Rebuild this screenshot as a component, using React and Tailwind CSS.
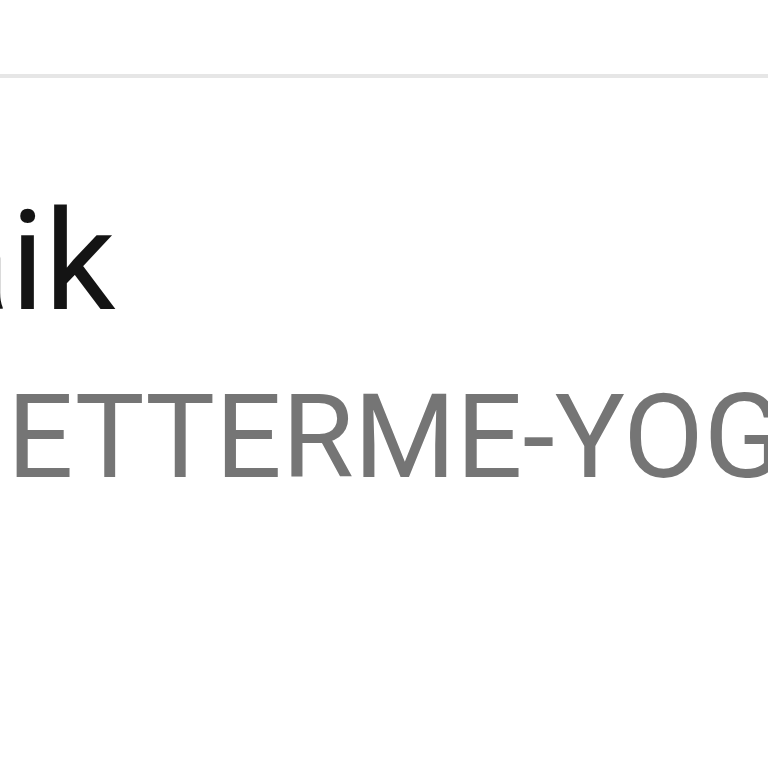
import React from 'react';

const App = () => {
  return (
    <div className="w-[768px] h-[768px] bg-white overflow-hidden" style={{ fontFamily: 'Roboto, "Liberation Sans", sans-serif' }}>
      <div className="pt-[74px]">
        <div className="h-[4px] bg-[#e6e6e6]" />
      </div>
      <div className="mt-[113px] whitespace-nowrap">
        <div className="ml-[-340px] text-[140px] leading-none text-[#141414]">Mosaik</div>
        <div className="mt-[48px] ml-[7px] text-[117px] leading-none text-[#757575]">ETTERME-YOGA</div>
      </div>
    </div>
  );
};

export default App;
